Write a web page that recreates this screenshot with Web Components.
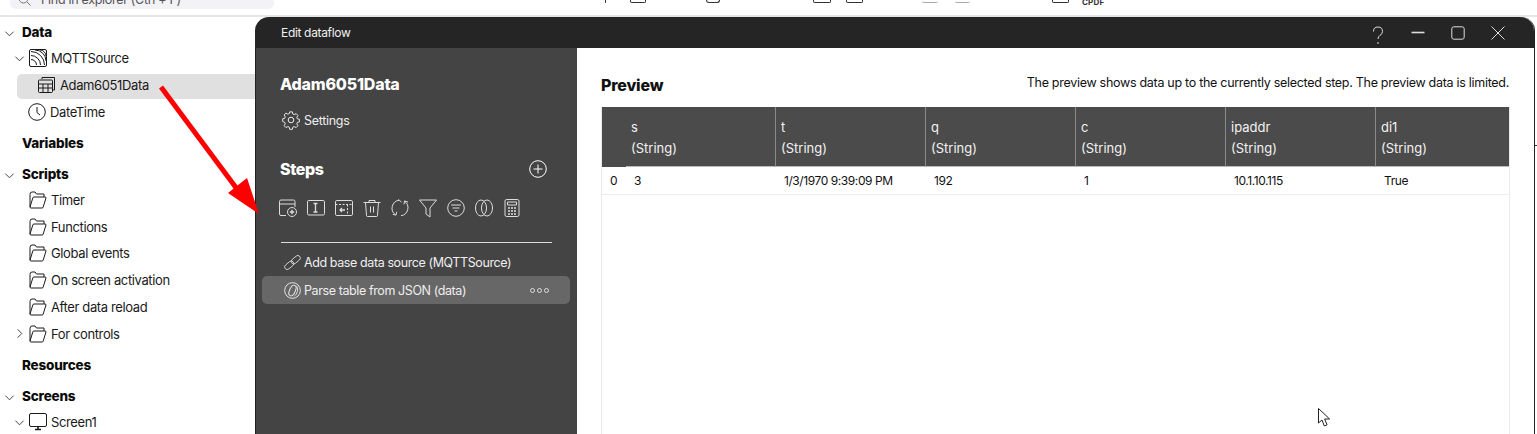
<!DOCTYPE html>
<html lang="en"><head><meta charset="utf-8"><title>Edit dataflow</title>
<style>
html,body{margin:0;height:434px;overflow:hidden;background:#fff;font-family:Inter,"Liberation Sans",sans-serif;color:#111}
</style></head><body>
<app-shell>
  <top-strip slot="top"></top-strip>
  <explorer-tree slot="tree">
    <tree-head chev="down">Data</tree-head>
    <tree-row level="1" chev="down" icon="mqtt">MQTTSource</tree-row>
    <tree-row level="2" icon="table" selected>Adam6051Data</tree-row>
    <tree-row level="1" icon="clock">DateTime</tree-row>
    <tree-head>Variables</tree-head>
    <tree-head chev="down">Scripts</tree-head>
    <tree-row level="1" icon="folder">Timer</tree-row>
    <tree-row level="1" icon="folder">Functions</tree-row>
    <tree-row level="1" icon="folder">Global events</tree-row>
    <tree-row level="1" icon="folder">On screen activation</tree-row>
    <tree-row level="1" icon="folder">After data reload</tree-row>
    <tree-row level="1" chev="right" icon="folder">For controls</tree-row>
    <tree-head>Resources</tree-head>
    <tree-head chev="down">Screens</tree-head>
    <tree-row level="1" chev="down" icon="monitor">Screen1</tree-row>
  </explorer-tree>
  <dataflow-window slot="window"></dataflow-window>
  <red-arrow slot="overlay"></red-arrow>
  <mouse-cursor slot="overlay"></mouse-cursor>
</app-shell>
<script>
const ICONS={
 chevdown:'<path d="M1.500 4 6 8.500 10.500 4" />',
 chevright:'<path d="M4 1.500 8.500 6 4 10.500" />',
 mqtt:'<rect x=".5" y=".5" width="17" height="17" rx="1.500"/><path d="M2 2.500A13.500 13.500 0 0 1 15.500 16M2 6.500A9.500 9.500 0 0 1 11.500 16M2 10.500A5.500 5.500 0 0 1 7.500 16M6 1A11 11 0 0 1 17 12M11 1A6 6 0 0 1 17 7"/>',
 table:'<path d="M4 3V1.500h12.500V14H15"/><rect x=".5" y="4" width="14" height="12.500" rx="1"/><path d="M.5 8h14M.5 12h14M5 8v8.500M10 8v8.500"/>',
 clock:'<circle cx="9" cy="9" r="8.300"/><path d="M9 4v5.500l3 2.500"/>',
 folder:'<path d="M1 16V3.500Q1 1 3 1h3l1.500 2H15v3M1 16q0 1 1 1h11q1 0 1.200-1L17 7q.2-1-1-1H5q-1 0-1.200 1L1 16Z"/>',
 monitor:'<rect x=".5" y=".5" width="17" height="13" rx="1.500"/><path d="M6 16.500h6M9 13.500v3" stroke-width="1.600"/>',
 gear:'<circle cx="9" cy="9" r="2.800"/><path d="M7.600 1h2.800l.4 2.200 1.500.7 2-1.100 1.900 2-1.200 1.900.6 1.500 2.100.5v2.800l-2.100.5-.6 1.500 1.200 1.900-1.900 2-2-1.100-1.500.7-.4 2.200H7.600l-.4-2.200-1.500-.7-2 1.100-1.900-2 1.200-1.900-.6-1.500L.3 11V8.200l2.100-.5.6-1.500L1.800 4.300l1.900-2 2 1.100 1.500-.7Z" transform="translate(.4 -.1) scale(.96)"/>',
 plus:'<circle cx="9" cy="9" r="8.300"/><path d="M9 4.500v9M4.500 9h9"/>',
 addsrc:'<path d="M7 16.500H2q-1.500 0-1.500-1.500V2.500Q.5 1 2 1h12.500Q16 1 16 2.500V8M.5 5h15.500"/><circle cx="13" cy="13" r="4.500"/><path d="M13 10.800v4.400M10.800 13h4.400" stroke-width="1.400"/>',
 rename:'<rect x=".5" y="1.500" width="17" height="14.500" rx="1.300"/><path d="M6.500 4.500h4M6.500 13h4M8.500 4.500V13" stroke-width="1.300"/>',
 cols:'<rect x=".5" y="1.500" width="17" height="15" rx="1.300"/><path d="M.5 5.500h17M12.500 5.500v11" stroke-dasharray="2 1.500"/><path d="M5 11h5M7 9l-2 2 2 2" stroke-width="1.300"/>',
 trash:'<path d="M.5 3.500h17M6 3.500V1.500h6v2M2.500 3.500 3.500 16.500q0 1 1 1h9q1 0 1-1l1-13M7.500 7.500v6M10.500 7.500v6"/>',
 refresh:'<path d="M8 1.300A8 8 0 0 0 4.500 15.800M10 16.700A8 8 0 0 0 13.500 2.200M7.500.3l3 3M1.800 15.300l3.200.8.700-3.300M17 3l-3.500-1-.5 3.300"/>',
 funnel:'<path d="M.5 1h17l-6.500 8v9l-4-3V9Z"/>',
 filter:'<circle cx="9" cy="9" r="8.300"/><path d="M4 6h10M5.500 9h7M7.500 12h3"/>',
 join:'<ellipse cx="6" cy="9" rx="5.500" ry="8"/><ellipse cx="12" cy="9" rx="5.500" ry="8"/>',
 calc:'<rect x="2" y=".5" width="14" height="17" rx="1.500"/><rect x="4.500" y="3" width="9" height="3"/><path d="M5 9h2M8 9h2M11 9h2M5 12h2M8 12h2M11 12h2M5 15h2M8 15h2M11 15h2" stroke-width="1.400"/>',
 link:'<g transform="rotate(-40 9 9)" stroke-width=".8"><rect x="-1" y="6.300" width="11" height="5.400" rx="2.700"/><rect x="8" y="6.300" width="11" height="5.400" rx="2.700"/></g>',
 parse:'<circle cx="9" cy="9" r="8.300"/><ellipse cx="9" cy="9" rx="3" ry="6" transform="rotate(25 9 9)"/><path d="M13.500 4.500C15.500 8 14 12.500 11 15"/>',
 question:'<path d="M2.500 5.500Q2.500 1 7 1t4.500 4.500q0 2.500-2.500 3.800Q7 10.500 7 13M7 16v2"/>',
 min:'<path d="M.5 6.500h13" stroke-width="1.600"/>',
 max:'<rect x=".8" y=".8" width="12.400" height="12.400" rx="2"/>',
 close:'<path d="M.5.5l13 13M13.500.5l-13 13"/>'
};
function def(name,html,extra){
  const t=document.createElement('template');t.innerHTML=html;
  customElements.define(name,class extends HTMLElement{
    constructor(){super();this.attachShadow({mode:'open'}).appendChild(t.content.cloneNode(true));}
    connectedCallback(){extra&&extra.call(this,this.shadowRoot);}
  });
}
def('ui-icon','<style>:host{display:inline-flex;flex:none}svg{display:block;width:100%;height:100%;fill:none;stroke:currentColor;stroke-width:1;stroke-linejoin:round;overflow:visible}</style><svg></svg>',function(r){
  const s=+this.getAttribute('size')||18,vb=this.getAttribute('vb')||s;
  this.style.width=this.style.height=s+'px';
  const svg=r.querySelector('svg');svg.setAttribute('viewBox','0 0 '+vb+' '+vb);
  svg.innerHTML=ICONS[this.getAttribute('name')]||'';
});
def('app-shell',`<style>
:host{display:block;position:relative;width:1537px;height:434px;overflow:hidden}
.tree{width:255px;overflow:hidden;margin-top:-3px}
.tick{position:absolute;left:1535px;top:145px;width:2px;height:1px;background:#333}
</style><slot name="top"></slot><div class="tree"><slot name="tree"></slot></div><slot name="window"></slot><slot name="overlay"></slot><div class="tick"></div>`);
def('top-strip',`<style>
:host{display:flex;align-items:flex-end;height:15px;border-bottom:2px solid #e6e6e6;position:relative;font-size:12.500px}
.search{width:264px;margin-left:10px;height:24px;margin-bottom:6px;padding-top:5px;flex:none;background:#f3f3f7;border-radius:6px;display:flex;align-items:center;gap:10px;padding-left:8px;box-sizing:border-box;color:#555;white-space:nowrap;overflow:hidden;letter-spacing:-.3px}
.search svg{width:13px;height:13px;fill:none;stroke:#777;flex:none}
.tools{display:flex;align-items:flex-start;margin-left:331px;height:15px;overflow:hidden;color:#333}
.tools i{display:block;border:1px solid #333;border-top:0;height:3px;flex:none;border-radius:0 0 2px 2px;box-sizing:border-box}
.tools b{display:block;font:700 8px Inter,"Liberation Sans",sans-serif;margin:-3px 0 0 13px;letter-spacing:.2px}
</style>
<div class="search"><svg viewBox="0 0 13 13"><circle cx="5.500" cy="5.500" r="4.500"/><path d="M9 9l3.500 3.500"/></svg><span>Find in explorer (Ctrl + F)</span></div>
<div class="tools"><i style="width:1px;border-width:0 1px 0 0"></i><i style="width:16px;margin-left:24px"></i><i style="width:14px;margin-left:60px;border-radius:0 0 8px 8px"></i><i style="width:18px;margin-left:93px"></i><i style="width:17px;margin-left:15px"></i><i style="width:16px;margin-left:59px;border-color:#aaa;border-width:0 0 1px"></i><i style="width:15px;margin-left:17px;border-color:#aaa;border-width:0 0 1px"></i><i style="width:17px;margin-left:82px"></i><b>CPDF</b></div>`);
def('explorer-tree','<style>:host{display:block}</style><slot></slot>');
def('tree-head',`<style>
:host{display:flex;align-items:center;box-sizing:border-box;height:30.7px;padding:5px 0 0 22px;font-weight:800;font-size:13.500px;letter-spacing:-.2px;position:relative;color:#0b0b0b}
.c{position:absolute;left:4px;top:12px;color:#333}
</style><span class="c"></span><slot></slot>`,function(r){
  const c=this.getAttribute('chev');
  if(c) r.querySelector('.c').innerHTML='<ui-icon name="chev'+c+'" size="11" vb="12"></ui-icon>';
});
def('tree-row',`<style>
:host{display:flow-root;height:26.8px;font-size:13px;letter-spacing:-.38px;color:#1a1a1a}
.r{display:flex;align-items:center;box-sizing:border-box;height:100%;position:relative;white-space:nowrap;border-radius:5px 0 0 5px}
:host([selected]) .r{background:#e0e0e0;height:25px;margin-top:2.6px;padding-bottom:3px}
.c{width:11px;flex:none;display:flex;color:#333;margin-right:4px}
.i{margin-right:4px;display:flex}
</style><div class="r"><span class="c"></span><span class="i"></span><slot></slot></div>`,function(r){
  const c=this.getAttribute('chev'),lv=this.getAttribute('level'),ic=this.getAttribute('icon');
  if(c) r.querySelector('.c').innerHTML='<ui-icon name="chev'+c+'" size="11" vb="12"></ui-icon>';
  if(lv=='1'){r.querySelector('.r').style.paddingLeft='14px';}
  else{const e=r.querySelector('.r');e.style.marginLeft='17px';e.style.paddingLeft='6px';}
  const i=r.querySelector('.i');
  i.innerHTML='<ui-icon name="'+ic+'" size="18"></ui-icon>';
  if(ic=='clock')i.style.marginLeft='-1px';
});
def('window-bar',`<style>
:host{display:flex;align-items:center;height:31px;background:#252525;color:#f0f0f0;font-size:12px;letter-spacing:-.33px;padding-left:26px;border-radius:14px 14px 0 0}
.s{flex:1}
.b{display:flex;gap:26px;padding-right:29px;color:#ddd;align-items:center}
</style><slot></slot><span class="s"></span><div class="b"><ui-icon name="question" size="14"></ui-icon><ui-icon name="min" size="14"></ui-icon><ui-icon name="max" size="14"></ui-icon><ui-icon name="close" size="14"></ui-icon></div>`);
def('step-row',`<style>
:host{display:flex;align-items:center;height:28px;margin:0 7px 0 6px;padding-left:22px;gap:3px;border-radius:5px;font-size:12.500px;letter-spacing:-.4px;color:#eee;white-space:nowrap}
:host([active]){background:#676767}
.more{margin-left:auto;margin-right:21px;display:flex;gap:2px}
.more i{width:3px;height:3px;border:1px solid #ddd;border-radius:50%;display:block}
</style><span class="ic"></span><slot></slot><span class="more" hidden></span>`,function(r){
  r.querySelector('.ic').innerHTML='<ui-icon name="'+this.getAttribute('icon')+'" size="17" vb="18" style="display:flex"></ui-icon>';
  if(this.hasAttribute('active')){const m=r.querySelector('.more');m.hidden=false;m.innerHTML='<i></i><i></i><i></i>';}
});
def('steps-panel',`<style>
:host{display:block;width:322px;background:#444;color:#fff;flex:none;box-sizing:border-box;border-left:1px solid #222}
h2{margin:0;font-weight:800;font-size:16px;letter-spacing:-.2px;line-height:20px}
.name{padding:26px 0 0 24px}
.set{display:flex;align-items:center;gap:4px;margin:15px 0 0 26px;font-size:12.500px;letter-spacing:-.3px;color:#eee;height:22px}
.hd{display:flex;align-items:center;justify-content:space-between;margin:26px 30px 0 24px;height:24px}
.hd h2{letter-spacing:-.4px}
.tools{display:flex;gap:10px;margin:18px 0 0 23px;color:#ddd}
hr{border:0;border-top:1px solid #ddd;margin:25px 25px 5px 25px}
</style>
<div class="name"><h2>Adam6051Data</h2></div>
<div class="set"><ui-icon name="gear" size="18"></ui-icon>Settings</div>
<div class="hd"><h2>Steps</h2><ui-icon name="plus" size="18"></ui-icon></div>
<div class="tools"><ui-icon name="addsrc" size="18"></ui-icon><ui-icon name="rename" size="18"></ui-icon><ui-icon name="cols" size="18"></ui-icon><ui-icon name="trash" size="18"></ui-icon><ui-icon name="refresh" size="18"></ui-icon><ui-icon name="funnel" size="18"></ui-icon><ui-icon name="filter" size="18"></ui-icon><ui-icon name="join" size="18"></ui-icon><ui-icon name="calc" size="18"></ui-icon></div>
<hr>
<step-row icon="link">Add base data source (MQTTSource)</step-row>
<step-row icon="parse" active>Parse table from JSON (data)</step-row>`);
def('preview-table',`<style>
:host{display:block;border-left:1px solid #e9e9e9;border-right:1px solid #e9e9e9;margin-top:4px;height:400px;font-size:12.500px;color:#111}
.g{display:grid;grid-template-columns:24px 150px 150px 150px 150px 150px 1fr}
.h{background:#4b4b4b;color:#f2f2f2;height:60px;box-sizing:border-box;padding:10px 5px 0;line-height:20.500px;font-size:13px;letter-spacing:0;border-left:1px solid #8a8a8a;border-bottom:1px solid #bbb;margin-left:-1px}
.h:nth-child(1){border:0;margin:0}
.h:nth-child(2){border-left:0;margin:0;padding-left:5px}
.c{height:28px;display:flex;align-items:center;padding-left:8px;border-bottom:1px solid #eee;box-sizing:border-box;letter-spacing:-.42px;font-size:12px}
</style><div class="g">
<div class="h"></div><div class="h">s<br>(String)</div><div class="h">t<br>(String)</div><div class="h">q<br>(String)</div><div class="h">c<br>(String)</div><div class="h">ipaddr<br>(String)</div><div class="h">di1<br>(String)</div>
<div class="c">0</div><div class="c">3</div><div class="c">1/3/1970 9:39:09 PM</div><div class="c">192</div><div class="c">1</div><div class="c">10.1.10.115</div><div class="c">True</div></div>`);
def('preview-pane',`<style>
:host{display:block;flex:1;padding:0 24px;background:#fff;min-width:0}
.t{display:flex;justify-content:space-between;align-items:center;height:36px;margin-top:19px;font-size:12.500px;letter-spacing:-.29px}
.t b{font-size:16px;font-weight:800;letter-spacing:-.2px}
.t span{margin:0 1px 6px 0}
</style><div class="t"><b>Preview</b><span>The preview shows data up to the currently selected step. The preview data is limited.</span></div><preview-table></preview-table>`);
def('dataflow-window',`<style>
:host{display:block;position:absolute;left:255px;top:17px;width:1280px;height:417px;box-sizing:border-box;border-right:1px solid #222;background:#fff;border-radius:14px 14px 0 0}
.b{display:flex;height:386px;overflow:hidden}
</style><window-bar>Edit dataflow</window-bar><div class="b"><steps-panel></steps-panel><preview-pane></preview-pane></div>`);
def('red-arrow',`<style>:host{display:block;position:absolute;left:150px;top:80px;width:115px;height:140px;pointer-events:none}svg{display:block}</style>
<svg width="115" height="140" viewBox="0 0 115 140"><path d="M11 7 90 113" stroke="#f00" stroke-width="5" fill="none"/><path d="M109 134 78 113 97 98Z" fill="#f00"/></svg>`);
def('mouse-cursor',`<style>:host{display:block;position:absolute;left:1318px;top:408px;width:13px;height:20px}svg{display:block}</style>
<svg width="13" height="20" viewBox="0 0 13 20"><path d="M.5.5V15l3.500-3 2.300 6 2.800-1.200-2.500-5.800h5Z" fill="#fff" stroke="#222"/></svg>`);
</script>
</body></html>
